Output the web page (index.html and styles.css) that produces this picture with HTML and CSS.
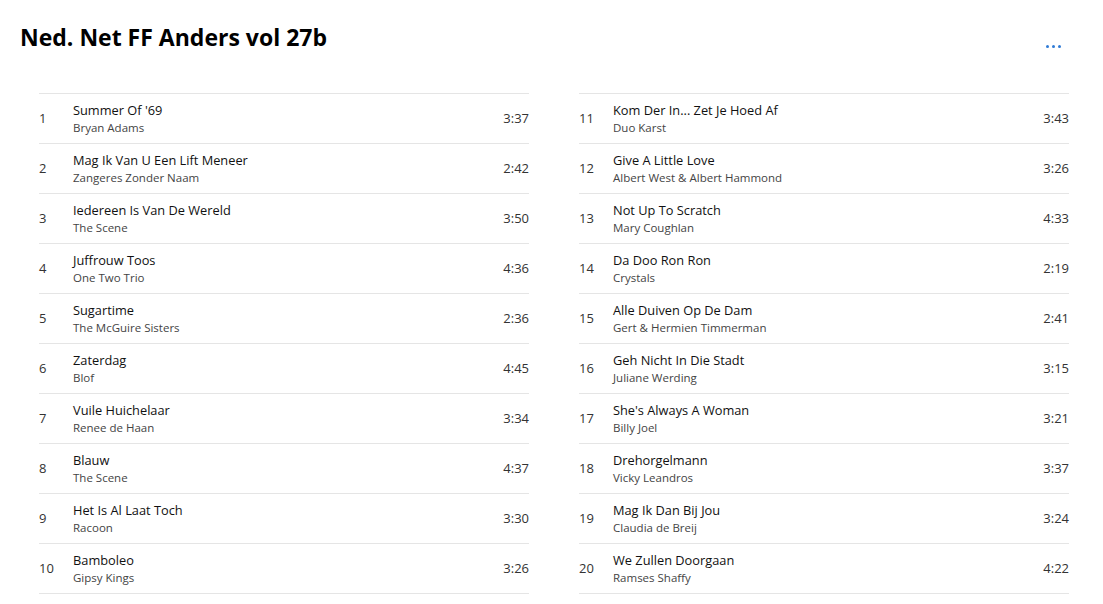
FILE: index.html
```html
<!DOCTYPE html>
<html>
<head>
<meta charset="utf-8">
<link rel="stylesheet" href="styles.css">
</head>
<body>
<header class="head">
  <h1 class="title">Ned. Net FF Anders vol 27b</h1>
  <button class="more" aria-label="More"><span></span><span></span><span></span></button>
</header>
<main class="cols">
  <ol class="list">
    <li class="row"><span class="num">1</span><div class="info"><div class="song">Summer Of '69</div><div class="artist">Bryan Adams</div></div><span class="dur">3:37</span></li>
    <li class="row"><span class="num">2</span><div class="info"><div class="song">Mag Ik Van U Een Lift Meneer</div><div class="artist">Zangeres Zonder Naam</div></div><span class="dur">2:42</span></li>
    <li class="row"><span class="num">3</span><div class="info"><div class="song">Iedereen Is Van De Wereld</div><div class="artist">The Scene</div></div><span class="dur">3:50</span></li>
    <li class="row"><span class="num">4</span><div class="info"><div class="song">Juffrouw Toos</div><div class="artist">One Two Trio</div></div><span class="dur">4:36</span></li>
    <li class="row"><span class="num">5</span><div class="info"><div class="song">Sugartime</div><div class="artist">The McGuire Sisters</div></div><span class="dur">2:36</span></li>
    <li class="row"><span class="num">6</span><div class="info"><div class="song">Zaterdag</div><div class="artist">Blof</div></div><span class="dur">4:45</span></li>
    <li class="row"><span class="num">7</span><div class="info"><div class="song">Vuile Huichelaar</div><div class="artist">Renee de Haan</div></div><span class="dur">3:34</span></li>
    <li class="row"><span class="num">8</span><div class="info"><div class="song">Blauw</div><div class="artist">The Scene</div></div><span class="dur">4:37</span></li>
    <li class="row"><span class="num">9</span><div class="info"><div class="song">Het Is Al Laat Toch</div><div class="artist">Racoon</div></div><span class="dur">3:30</span></li>
    <li class="row"><span class="num">10</span><div class="info"><div class="song">Bamboleo</div><div class="artist">Gipsy Kings</div></div><span class="dur">3:26</span></li>
  </ol>
  <ol class="list">
    <li class="row"><span class="num">11</span><div class="info"><div class="song">Kom Der In... Zet Je Hoed Af</div><div class="artist">Duo Karst</div></div><span class="dur">3:43</span></li>
    <li class="row"><span class="num">12</span><div class="info"><div class="song">Give A Little Love</div><div class="artist">Albert West &amp; Albert Hammond</div></div><span class="dur">3:26</span></li>
    <li class="row"><span class="num">13</span><div class="info"><div class="song">Not Up To Scratch</div><div class="artist">Mary Coughlan</div></div><span class="dur">4:33</span></li>
    <li class="row"><span class="num">14</span><div class="info"><div class="song">Da Doo Ron Ron</div><div class="artist">Crystals</div></div><span class="dur">2:19</span></li>
    <li class="row"><span class="num">15</span><div class="info"><div class="song">Alle Duiven Op De Dam</div><div class="artist">Gert &amp; Hermien Timmerman</div></div><span class="dur">2:41</span></li>
    <li class="row"><span class="num">16</span><div class="info"><div class="song">Geh Nicht In Die Stadt</div><div class="artist">Juliane Werding</div></div><span class="dur">3:15</span></li>
    <li class="row"><span class="num">17</span><div class="info"><div class="song">She's Always A Woman</div><div class="artist">Billy Joel</div></div><span class="dur">3:21</span></li>
    <li class="row"><span class="num">18</span><div class="info"><div class="song">Drehorgelmann</div><div class="artist">Vicky Leandros</div></div><span class="dur">3:37</span></li>
    <li class="row"><span class="num">19</span><div class="info"><div class="song">Mag Ik Dan Bij Jou</div><div class="artist">Claudia de Breij</div></div><span class="dur">3:24</span></li>
    <li class="row"><span class="num">20</span><div class="info"><div class="song">We Zullen Doorgaan</div><div class="artist">Ramses Shaffy</div></div><span class="dur">4:22</span></li>
  </ol>
</main>
</body>
</html>
```

FILE: styles.css
```css
html, body {
  margin: 0;
  padding: 0;
  background: #ffffff;
  font-family: "Open Sans", "Noto Sans", "Liberation Sans", sans-serif;
  color: #1a1a1a;
}

.head {
  display: flex;
  align-items: flex-start;
  justify-content: space-between;
  padding: 22px 42px 0 20px;
  height: 69px;
  box-sizing: border-box;
}

.title {
  margin: 0;
  font-size: 23px;
  font-weight: 700;
  line-height: 30px;
  color: #000;
}

.more {
  display: flex;
  gap: 3px;
  border: 0;
  background: transparent;
  padding: 0;
  margin-top: 23px;
  cursor: pointer;
}

.more span {
  width: 3px;
  height: 3px;
  border-radius: 50%;
  background: #2f7bd6;
}

.cols {
  display: grid;
  grid-template-columns: 490px 490px;
  column-gap: 50px;
  padding: 24px 0 0 39px;
}

.list {
  list-style: none;
  margin: 0;
  padding: 0;
  border-top: 1px solid #e5e5e5;
}

.row {
  display: flex;
  align-items: center;
  height: 50px;
  border-bottom: 1px solid #e5e5e5;
  box-sizing: border-box;
}

.num {
  width: 34px;
  flex: none;
  font-size: 13px;
  color: #333;
  margin-top: -2px;
}

.info {
  flex: 1;
  display: flex;
  flex-direction: column;
}

.song {
  font-size: 12.8px;
  line-height: 17px;
  color: #111;
}

.artist {
  font-size: 11.5px;
  line-height: 17px;
  color: #444;
}

.dur {
  font-size: 13px;
  color: #333;
  margin-top: -2px;
}
```
